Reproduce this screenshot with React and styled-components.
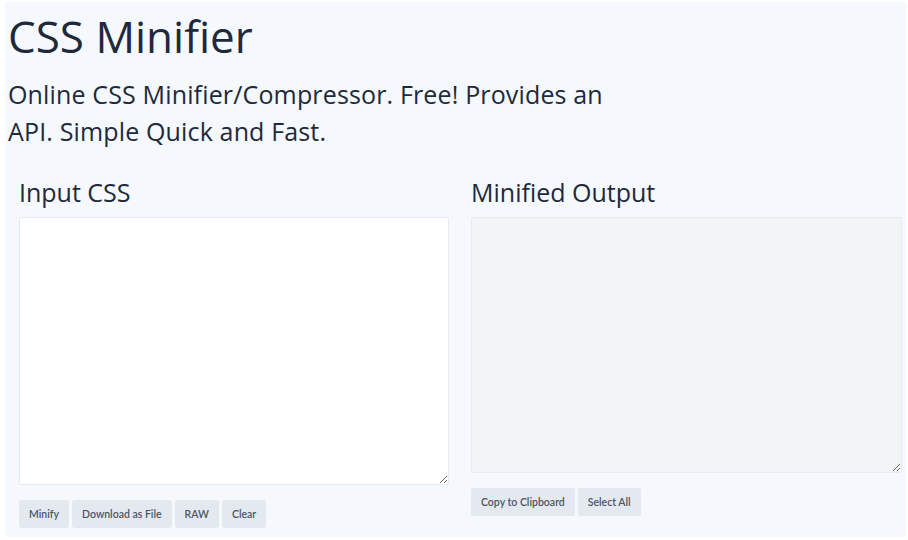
import React from 'react';
import styled, {createGlobalStyle} from 'styled-components';

const GlobalStyle = createGlobalStyle`
  html, body {
    margin: 0;
    padding: 0;
    background: #ffffff;
  }
  body {
    font-family: "Open Sans", "Noto Sans", sans-serif;
  }
`;

const App = () => {
    return (
        <>
            <GlobalStyle />
            <Page>
                <Title>CSS Minifier</Title>
                <Lead>
                    Online CSS Minifier/Compressor. Free! Provides an<br />
                    API. Simple Quick and Fast.
                </Lead>
                <Columns>
                    <Panel>
                        <PanelTitle>Input CSS</PanelTitle>
                        <Editor height={268} />
                        <ButtonRow>
                            <Button>Minify</Button>
                            <Button>Download as File</Button>
                            <Button>RAW</Button>
                            <Button>Clear</Button>
                        </ButtonRow>
                    </Panel>
                    <Panel>
                        <PanelTitle>Minified Output</PanelTitle>
                        <Editor height={256} readOnly muted />
                        <ButtonRow>
                            <Button>Copy to Clipboard</Button>
                            <Button>Select All</Button>
                        </ButtonRow>
                    </Panel>
                </Columns>
            </Page>
        </>
    );
}

export default App;

const Page = styled.div`
  margin: 2px 2px 3px 5px;
  height: 535px;
  box-sizing: border-box;
  background: #f5f8fc;
  padding: 0 0 0 3px;
  color: #1e2a3b;
  overflow: hidden;
`;

const Title = styled.h1`
  margin: 0;
  padding-top: 8px;
  font-size: 44px;
  font-weight: 400;
  line-height: 52px;
`;

const Lead = styled.p`
  margin: 14px 0 0;
  font-size: 25px;
  font-weight: 400;
  letter-spacing: 0.15px;
  line-height: 37px;
`;

const Columns = styled.div`
  display: grid;
  grid-template-columns: 430px 431px;
  column-gap: 22px;
  padding-left: 11px;
  margin-top: 25px;
`;

const Panel = styled.div`
  display: flex;
  flex-direction: column;
`;

const PanelTitle = styled.h2`
  margin: 0 0 10px;
  font-size: 25px;
  font-weight: 400;
  line-height: 30px;
  padding-top: 2px;
`;

const Editor = styled.textarea`
  display: block;
  box-sizing: border-box;
  width: 100%;
  height: ${p => p.height}px;
  margin: 0;
  border: 1px solid #e7ebf0;
  border-radius: 2px;
  background: ${p => (p.muted ? '#f2f4f6' : '#ffffff')};
  resize: vertical;
  outline: none;
`;

const ButtonRow = styled.div`
  display: flex;
  gap: 3px;
  margin-top: 15px;
`;

const Button = styled.button`
  height: 28px;
  padding: 0 10px;
  border: none;
  border-radius: 3px;
  background: #e4e8ef;
  color: #4a5565;
  font-family: "Lato", sans-serif;
  font-size: 10.5px;
  font-weight: 600;
  cursor: pointer;
`;
